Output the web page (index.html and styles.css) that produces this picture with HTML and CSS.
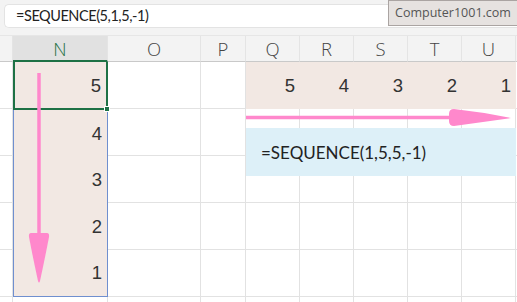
FILE: index.html
```html
<!DOCTYPE html>
<html>
<head>
<meta charset="utf-8">
<link rel="stylesheet" href="styles.css">
</head>
<body>
<div class="app">
  <div class="topbar">
    <div class="fx">=SEQUENCE(5,1,5,-1)</div>
  </div>
  <div class="sheet">
    <div class="hd"></div>
    <div class="hd sel">N</div>
    <div class="hd">O</div>
    <div class="hd">P</div>
    <div class="hd">Q</div>
    <div class="hd">R</div>
    <div class="hd">S</div>
    <div class="hd">T</div>
    <div class="hd">U</div>
    <div class="hd last"></div>

    <div class="range-n">
      <div class="nc active">5<span class="handle"></span></div>
      <div class="nc">4</div>
      <div class="nc">3</div>
      <div class="nc">2</div>
      <div class="nc">1</div>
    </div>
    <div class="range-row">
      <div class="nc">5</div>
      <div class="nc">4</div>
      <div class="nc">3</div>
      <div class="nc">2</div>
      <div class="nc">1</div>
    </div>

    <div class="c"></div><div class="c"></div><div class="c"></div><div class="c last"></div>

    <div class="c"></div><div class="c"></div><div class="c"></div><div class="c"></div><div class="c"></div><div class="c"></div><div class="c"></div><div class="c"></div><div class="c last"></div>
    <div class="c"></div><div class="c"></div><div class="c"></div><div class="c"></div><div class="c"></div><div class="c"></div><div class="c"></div><div class="c"></div><div class="c last"></div>
    <div class="c"></div><div class="c"></div><div class="c"></div><div class="c"></div><div class="c"></div><div class="c"></div><div class="c"></div><div class="c"></div><div class="c last"></div>
    <div class="c"></div><div class="c"></div><div class="c"></div><div class="c"></div><div class="c"></div><div class="c"></div><div class="c"></div><div class="c"></div><div class="c last"></div>

    <div class="c end"></div><div class="c end"></div><div class="c end"></div><div class="c end"></div><div class="c end"></div><div class="c end"></div><div class="c end"></div><div class="c end"></div><div class="c end"></div><div class="c end last"></div>
  </div>

  <div class="callout">=SEQUENCE(1,5,5,-1)</div>

  <svg class="arrows" width="517" height="302" viewBox="0 0 517 302">
    <line x1="39" y1="73" x2="39" y2="240" stroke="#ff88cc" stroke-width="3.5"/>
    <path d="M31,233 L47,233 Q49.5,233 49,237 Q45,258 40,281 Q39,284 38,281 Q33,258 29,237 Q28.5,233 31,233 Z" fill="#ff88cc"/>
    <line x1="246" y1="117.5" x2="455" y2="117.5" stroke="#ff88cc" stroke-width="3.5"/>
    <path d="M454,109 Q449,109 449,114 L449,121 Q449,126 454,126 Q482,122 511,118 Q482,112 454,109 Z" fill="#ff88cc"/>
  </svg>

  <div class="badge">Computer1001.com</div>
</div>
</body>
</html>
```

FILE: styles.css
```css
* { box-sizing: border-box; }
html, body { margin: 0; padding: 0; background: #fff; }
.app {
  position: relative;
  width: 517px;
  height: 302px;
  overflow: hidden;
  font-family: "Open Sans", "Liberation Sans", sans-serif;
}
.topbar {
  height: 36px;
  background: #f3f3f3;
  padding: 4px 0 0 4px;
  border-bottom: 1px solid #e6e6e6;
}
.fx {
  height: 24px;
  background: #fff;
  border: 1px solid #e3e3e3;
  border-right: none;
  border-radius: 5px 0 0 5px;
  padding-left: 11px;
  font-family: "Lato", "Open Sans", sans-serif;
  font-size: 14.5px;
  letter-spacing: -0.45px;
  line-height: 22px;
  color: #222;
}
.sheet {
  display: grid;
  grid-template-columns: 13px 95px 93px 45px repeat(5, 54px) 1fr;
  grid-template-rows: 26px repeat(5, 47px) 10px;
}
.hd {
  background: #f3f3f3;
  border-right: 1px solid #e4e4e4;
  border-bottom: 1px solid #c9c9c9;
  text-align: center;
  font-size: 18.5px;
  font-weight: 300;
  line-height: 25px;
  color: #444;
}
.hd.sel {
  background: #e1e1e1;
  color: #1e7145;
  border-bottom: 2px solid #1e7145;
}
.hd.last, .c.last { border-right: none; }
.c {
  border-right: 1px solid #e2e2e2;
  border-bottom: 1px solid #e2e2e2;
}
.c.end { border-bottom: none; }
.range-n {
  grid-column: 2;
  grid-row: 2 / span 5;
  background: #f2e8e3;
  border: 1px solid #6f8fcf;
  border-top: none;
  display: flex;
  flex-direction: column;
}
.range-row {
  grid-column: 5 / span 5;
  grid-row: 2;
  background: #f2e8e3;
  display: grid;
  grid-template-columns: repeat(5, 1fr);
}
.nc {
  height: 47px;
  text-align: right;
  padding: 12px 5px 0 0;
  font-family: "Liberation Sans", Arial, sans-serif;
  font-size: 18.5px;
  line-height: 24px;
  color: #333;
  position: relative;
}
.range-n .nc { padding-right: 5px; }
.range-n .nc.active {
  margin: 0 -1px 0 -1px;
  border: 2px solid #1e7145;
  border-top: none;
  padding: 12px 5px 0 0;
  height: 48px;
}
.handle {
  position: absolute;
  right: -4px;
  bottom: -4px;
  width: 6px;
  height: 6px;
  background: #1e7145;
  border: 1px solid #fff;
}
.callout {
  position: absolute;
  left: 246px;
  top: 128px;
  width: 270px;
  height: 48px;
  background: #ddf0f8;
  padding-left: 15px;
  font-family: "Lato", "Open Sans", sans-serif;
  font-size: 17px;
  line-height: 50px;
  color: #222;
}
.arrows {
  position: absolute;
  left: 0;
  top: 0;
  pointer-events: none;
}
.badge {
  position: absolute;
  right: 0;
  top: 0;
  width: 129px;
  height: 26px;
  background: #e6e2e0;
  border: 1px solid #aaa4a2;
  border-right: none;
  text-align: center;
  font-family: "Open Sans", sans-serif;
  font-size: 12.5px;
  line-height: 24px;
  color: #555;
}
```
